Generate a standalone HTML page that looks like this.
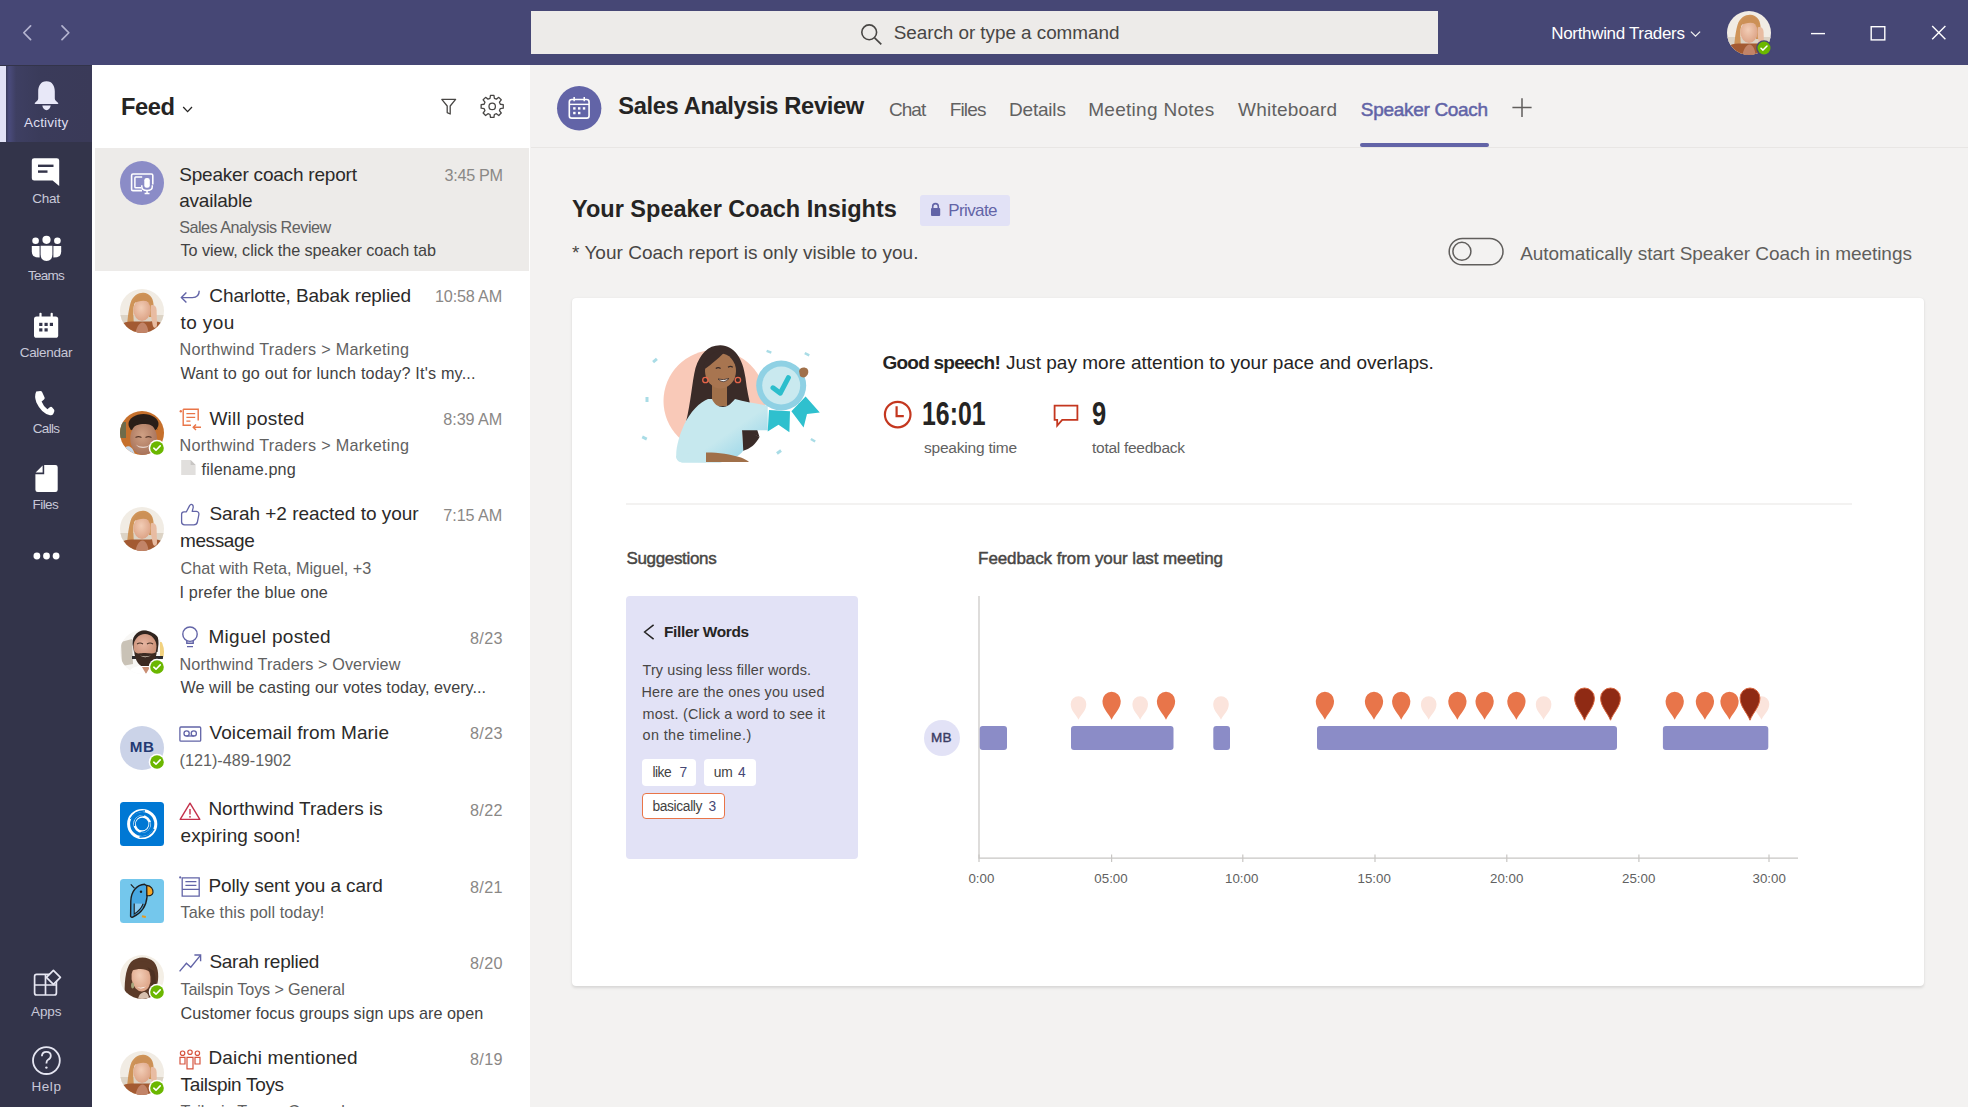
<!DOCTYPE html>
<html><head><meta charset="utf-8"><title>Teams - Speaker Coach</title>
<style>
html,body{margin:0;padding:0;width:1968px;height:1107px;overflow:hidden;background:#F3F2F1;font-family:"Liberation Sans",sans-serif;}
.t{position:absolute;white-space:nowrap;line-height:1;font-family:"Liberation Sans",sans-serif;}
.a{position:absolute;}
svg{position:absolute;overflow:visible;}
</style></head><body>
<div class="a" style="left:0;top:0;width:1968px;height:65px;background:#464775"></div>
<div class="a" style="left:0;top:65px;width:92px;height:1042px;background:#33344A"></div>
<div class="a" style="left:0;top:66px;width:92px;height:76px;background:linear-gradient(90deg,#3A3B5A 6px,#4A4B7C 9px,#3E3F62 16px,#3A3B5A 40px,#3A3A58 100%)"></div>
<div class="a" style="left:0;top:66px;width:6px;height:76px;background:#E2E2F6"></div>
<div class="a" style="left:92px;top:65px;width:438px;height:1042px;background:#FFFFFF"></div>
<div class="a" style="left:95px;top:148px;width:434px;height:123px;background:#EDEBE9"></div>
<div class="a" style="left:530.5px;top:11px;width:907px;height:43px;background:#EDEBE9"></div>
<div class="a" style="left:531px;top:147px;width:1437px;height:1px;background:#E8E6E4"></div>
<div class="a" style="left:1360px;top:143px;width:129px;height:4px;background:#6264A7;border-radius:2px"></div>
<div class="a" style="left:920px;top:195px;width:90px;height:31px;background:#E2E2F6;border-radius:3px"></div>
<div class="a" style="left:572px;top:298px;width:1352px;height:687.5px;background:#FFFFFF;border-radius:4px;box-shadow:0 1.5px 3px rgba(0,0,0,0.11),0 0 1px rgba(0,0,0,0.06)"></div>
<div class="a" style="left:626px;top:503px;width:1226px;height:2px;background:#F3F2F1"></div>
<div class="a" style="left:626px;top:596px;width:232px;height:263px;background:#E2E2F6;border-radius:4px"></div>
<div class="a" style="left:642px;top:759px;width:54px;height:27px;background:#FFFFFF;border-radius:4px"></div>
<div class="a" style="left:704px;top:759px;width:52px;height:27px;background:#FFFFFF;border-radius:4px"></div>
<div class="a" style="left:642px;top:793px;width:81px;height:24px;background:#FFFFFF;border:1.5px solid #E97548;border-radius:4px"></div>
<div class="a" style="left:924px;top:720px;width:36px;height:36px;background:#E2E2F6;border-radius:50%"></div>

<svg width="0" height="0" style="position:absolute;left:0;top:0">
<defs>
 <clipPath id="cc"><circle cx="22" cy="22" r="22"/></clipPath>
 <radialGradient id="skinA" cx="0.45" cy="0.4" r="0.6"><stop offset="0" stop-color="#F2CDB6"/><stop offset="1" stop-color="#DDA487"/></radialGradient>
 <radialGradient id="skinW" cx="0.45" cy="0.4" r="0.6"><stop offset="0" stop-color="#CFA084"/><stop offset="1" stop-color="#A8735A"/></radialGradient>
 <radialGradient id="skinM" cx="0.45" cy="0.4" r="0.6"><stop offset="0" stop-color="#E6B4A0"/><stop offset="1" stop-color="#C98E74"/></radialGradient>
 <symbol id="av_blonde" viewBox="0 0 44 44"><g clip-path="url(#cc)">
  <rect width="44" height="44" fill="#F1ECE4"/>
  <rect y="26" width="44" height="18" fill="#DCD3C5"/>
  <path d="M6 44 C7.5 34 8 22 10.5 14 C13 6 19 3.5 23.5 3.8 C29 4.2 33 8 33.5 15 C33.8 20 33 24 32 28 L29 28 C30 20 29 13 24 10 C18 8 14 12 13.5 20 C13 28 14 36 15 44 Z" fill="#CF9458"/>
  <ellipse cx="22" cy="21" rx="8.6" ry="11" fill="url(#skinA)"/>
  <path d="M13 14.5 C14.5 7.5 20 5 25 5.5 C30 6 32.5 10 32.5 15.5 C28.5 11.5 22 10 13 14.5 Z" fill="#CC9056"/>
  <path d="M0 44 V36 C4 33 9 32 14 32.5 L30 32.5 C35 31.5 40 32.5 44 35.5 V44 Z" fill="#A35A32"/>
  <path d="M15.5 44 C16.5 38 19 34 22.5 33.5 C26 34 28 38 28.5 44 Z" fill="#C28468"/>
  <path d="M30.8 16.5 C33.5 15.2 36.4 17 36.6 21 L37 36 C36.6 39.5 33.6 39.6 32.8 36.4 L30.8 26 Z" fill="#E8BCA2"/>
 </g></symbol>
 <symbol id="av_will" viewBox="0 0 44 44"><g clip-path="url(#cc)">
  <rect width="44" height="44" fill="#C6702C"/>
  <rect x="0" y="11" width="6" height="16" fill="#6F6B4A"/>
  <ellipse cx="23.5" cy="13" rx="15" ry="10" fill="#2A1E18"/>
  <ellipse cx="23.6" cy="27.5" rx="13.4" ry="16.6" fill="url(#skinW)"/>
  <path d="M10.2 19 C10.8 10.5 17 7.5 24 7.5 C31 7.5 36.5 10.5 37.4 19 C33.5 14 28.5 13 24 13 C19 13 14 14.5 10.2 19 Z" fill="#2A1E18"/>
  <path d="M16 33.5 C19.5 36.5 27 36.5 30 33.5 C28 38 18.5 38.5 16 33.5 Z" fill="#E6D3CA"/>
  <path d="M15.5 26.5 Q18.5 24.8 21.5 26.5 M25.5 26.5 Q28.5 24.8 31.5 26.5" stroke="#5A3A2C" stroke-width="1.1" fill="none"/>
  <path d="M3 44 L5.5 36 C9 34 13 36 15 44 Z" fill="#C6D8EA"/>
 </g></symbol>
 <symbol id="av_miguel" viewBox="0 0 44 44"><g clip-path="url(#cc)">
  <rect width="44" height="44" fill="#F8F7F5"/>
  <path d="M1 12 L12 9 L13 34 L2 36 Z" fill="#C9C2B6"/>
  <rect x="40" y="12" width="5" height="15" fill="#F2D27F"/>
  <rect x="12" y="26" width="31" height="3" fill="#2C2C30"/>
  <path d="M12.5 14 C12 4 20 0 26 0 C34 0 39 4 38.5 14 L37.5 22 L35.5 22 L35 12 C31 8 18 8 15 13 L14 22 Z" fill="#30241E"/>
  <ellipse cx="25" cy="16.5" rx="11.5" ry="12.5" fill="url(#skinM)"/>
  <path d="M14 20 C15 32 20 37 25 37 C31 37 36 32 37 20 C35 25 31 23 25 23 C19 23 16 25 14 20 Z" fill="#3B2A22"/>
  <path d="M20 25.5 Q25 29 31 25.5 Q25 27.5 20 25.5 Z" fill="#F1E6D6"/>
  <path d="M17 14 Q20 12 23 14 M27 14 Q30 12 33 14" stroke="#4A3328" stroke-width="1.1" fill="none"/>
  <path d="M8 44 C10 38 16 36 20 36 L31 36 C36 36 41 38 43 44 Z" fill="#FFFFFF"/>
  <path d="M22 37 L26 44 L30 37 Z" fill="#C98E74"/>
 </g></symbol>
 <symbol id="av_sarah2" viewBox="0 0 44 44"><g clip-path="url(#cc)">
  <rect width="44" height="44" fill="#F4EFE6"/>
  <path d="M5 44 C4 30 5 14 11 7 C17 1 28 1 34 7 C39 13 39 24 37 30 C35 36 30 40 26 44 Z" fill="#5B3A28"/>
  <ellipse cx="21" cy="23" rx="9.5" ry="13.5" fill="url(#skinA)" transform="rotate(-8 21 23)"/>
  <path d="M11 16 C13 8 20 5 27 7 C33 9 35 15 34 22 C31 16 24 11 11 16 Z" fill="#5B3A28"/>
  <path d="M27 12 C31 16 33 24 31 32 C29 37 26 40 24 44 L34 44 C36 36 37 24 34 16 Z" fill="#4E3122"/>
  <path d="M17 32 Q21 35 26 31.5 Q21 33.5 17 32 Z" fill="#FFFFFF"/>
  <ellipse cx="12.6" cy="30.5" rx="1.5" ry="3" fill="#A7A57C"/>
  <path d="M18 44 C19 39 22 37 25 37 C28 38 29 41 29 44 Z" fill="#D6BFAE"/>
 </g></symbol>
</defs></svg>

<svg style="left:0;top:0" width="1968" height="65">
 <path d="M30.6 25.9 L23.8 32.75 L30.6 39.6" stroke="#B4B4D0" stroke-width="1.7" fill="none" stroke-linecap="round" stroke-linejoin="round"/>
 <path d="M62 25.9 L68.8 32.75 L62 39.6" stroke="#B4B4D0" stroke-width="1.7" fill="none" stroke-linecap="round" stroke-linejoin="round"/>
 <circle cx="869.2" cy="32.3" r="7.4" stroke="#484644" stroke-width="1.6" fill="none"/>
 <path d="M874.6 37.8 L881.3 44.3" stroke="#484644" stroke-width="1.7"/>
 <path d="M1690.9 31.6 L1695.5 36.2 L1700.1 31.6" stroke="#F0F0F0" stroke-width="1.3" fill="none"/>
 <path d="M1811 33.6 H1825" stroke="#FFFFFF" stroke-width="1.4"/>
 <rect x="1871.2" y="26.7" width="13.6" height="13.2" stroke="#FFFFFF" stroke-width="1.4" fill="none"/>
 <path d="M1932.2 26 L1945.4 39.2 M1945.4 26 L1932.2 39.2" stroke="#FFFFFF" stroke-width="1.4"/>
</svg>
<svg style="left:1727.2px;top:10.5px" width="44" height="44" viewBox="0 0 44 44"><use href="#av_blonde"/></svg>
<svg style="left:1754.4px;top:37.9px" width="20" height="20" viewBox="0 0 20 20"><circle cx="10" cy="10" r="7.8" fill="#464775"/><circle cx="10" cy="10" r="6.5" fill="#6BB700"/><path d="M7 10.2 L9 12.1 L13 8" stroke="#fff" stroke-width="1.5" fill="none" stroke-linecap="round" stroke-linejoin="round"/></svg>
<svg style="left:0;top:65px" width="92" height="1042" viewBox="0 65 92 1042">
 <path d="M46.5 81.2 C40.6 81.2 38.2 86.2 38.2 91.5 L38.2 98.6 C38.2 100.2 36.6 101.6 34.8 103 Q34.2 104 35.5 104 L57.5 104 Q58.8 104 58.2 103 C56.4 101.6 54.8 100.2 54.8 98.6 L54.8 91.5 C54.8 86.2 52.4 81.2 46.5 81.2 Z" fill="#E8E8F8"/>
 <path d="M42.3 105.6 C42.6 108.3 44.4 110.2 46.5 110.2 C48.6 110.2 50.4 108.3 50.7 105.6 Z" fill="#E8E8F8"/>
 <path d="M34.2 158.2 H56.8 Q59.2 158.2 59.2 160.6 V186 L52.6 180.6 H34.2 Q31.8 180.6 31.8 178.2 V160.6 Q31.8 158.2 34.2 158.2 Z" fill="#FFFFFF"/>
 <rect x="38" y="164.6" width="15.5" height="2.4" fill="#33344A"/>
 <rect x="38" y="170.4" width="9.5" height="2.4" fill="#33344A"/>
 <circle cx="35.6" cy="240.8" r="3.3" fill="#fff"/><circle cx="46.5" cy="239.8" r="4.1" fill="#fff"/><circle cx="57.4" cy="240.8" r="3.3" fill="#fff"/>
 <path d="M31.8 246 H39.6 V257.5 Q35.4 257.5 33.4 256 Q31.8 254.5 31.8 251.5 Z" fill="#fff"/>
 <path d="M61.2 246 H53.4 V257.5 Q57.6 257.5 59.6 256 Q61.2 254.5 61.2 251.5 Z" fill="#fff"/>
 <path d="M40.6 245.8 H52.4 V254.5 Q52.4 261 46.5 261 Q40.6 261 40.6 254.5 Z" fill="#fff"/>
 <rect x="34" y="316.5" width="24.2" height="21.3" rx="2.6" fill="#fff"/>
 <rect x="39.4" y="312.8" width="2.2" height="5.5" rx="1" fill="#fff"/><rect x="50.6" y="312.8" width="2.2" height="5.5" rx="1" fill="#fff"/>
 <rect x="39.2" y="322.8" width="3.2" height="3.2" fill="#33344A"/><rect x="44.5" y="322.8" width="3.2" height="3.2" fill="#33344A"/><rect x="49.8" y="322.8" width="3.2" height="3.2" fill="#33344A"/>
 <rect x="39.2" y="328.3" width="3.2" height="3.2" fill="#33344A"/><rect x="44.5" y="328.3" width="3.2" height="3.2" fill="#33344A"/>
 <path d="M36.2 391.6 L40.4 391 Q41.6 391 42.2 392.2 L44.6 397.6 Q45 398.8 44 399.6 L41.6 401.4 Q43.2 405.8 47.4 409.2 L49.8 407.2 Q50.8 406.4 51.8 407 L54 409.6 Q54.6 410.6 54.2 411.8 L53.2 414 Q52.2 415.6 50 415.2 Q41.4 413.2 36.4 402.4 Q34 396.4 36.2 391.6 Z" fill="#fff"/>
 <path d="M44.2 465 H55.4 Q57.7 465 57.7 467.3 V489.7 Q57.7 492 55.4 492 H37.7 Q35.4 492 35.4 489.7 V474.2 H44.2 Z" fill="#fff"/>
 <path d="M42.6 465.4 L35.6 472.6 L42.6 472.6 Z" fill="#fff"/>
 <circle cx="36.9" cy="556" r="3.4" fill="#fff"/><circle cx="46.5" cy="556" r="3.4" fill="#fff"/><circle cx="56.1" cy="556" r="3.4" fill="#fff"/>
 <path d="M36.6 974.4 H54.4 Q56.4 974.4 56.4 976.4 V993 Q56.4 995 54.4 995 H36.6 Q34.6 995 34.6 993 V976.4 Q34.6 974.4 36.6 974.4 Z M45.5 974.4 V995 M34.6 985 H56.4" stroke="#E6E6F2" stroke-width="1.7" fill="none"/>
 <path d="M53.4 970.4 L60.4 977.4 L53.4 984.4 L46.4 977.4 Z" stroke="#E6E6F2" stroke-width="1.7" fill="#33344A" stroke-linejoin="round"/>
 <circle cx="46.4" cy="1060.6" r="13.4" stroke="#E6E6F2" stroke-width="1.8" fill="none"/>
 <path d="M41.9 1056.2 Q42 1051.8 46.4 1051.8 Q50.8 1051.8 50.8 1055.8 Q50.8 1058.4 48 1059.8 Q46.4 1060.8 46.4 1063.4" stroke="#E6E6F2" stroke-width="1.8" fill="none"/>
 <circle cx="46.4" cy="1067.6" r="1.2" fill="#E6E6F2"/>
</svg>
<svg style="left:0;top:0" width="540" height="140">
 <path d="M183.2 107 L187.6 111.6 L192 107" stroke="#252423" stroke-width="1.3" fill="none"/>
 <path d="M441.8 99.4 H455.6 L450.2 106 V114 L447.2 112.6 V106 Z" stroke="#484644" stroke-width="1.3" fill="none" stroke-linejoin="round"/>
 <path d="M500.32 104.24 L503.26 104.66 L503.26 108.14 L500.32 108.56 L499.47 110.61 L501.25 112.99 L498.79 115.45 L496.41 113.67 L494.36 114.52 L493.94 117.46 L490.46 117.46 L490.04 114.52 L487.99 113.67 L485.61 115.45 L483.15 112.99 L484.93 110.61 L484.08 108.56 L481.14 108.14 L481.14 104.66 L484.08 104.24 L484.93 102.19 L483.15 99.81 L485.61 97.35 L487.99 99.13 L490.04 98.28 L490.46 95.34 L493.94 95.34 L494.36 98.28 L496.41 99.13 L498.79 97.35 L501.25 99.81 L499.47 102.19 Z" stroke="#484644" stroke-width="1.3" fill="none" stroke-linejoin="round"/>
 <circle cx="492.2" cy="106.4" r="3.2" stroke="#484644" stroke-width="1.3" fill="none"/>
</svg>
<svg style="left:120px;top:161px" width="44" height="44"><circle cx="22" cy="22" r="22" fill="#8B8CC7"/><path d="M22 29.6 H13 Q11.6 29.6 11.6 28.2 V14.4 Q11.6 13 13 13 H31.4 Q32.8 13 32.8 14.4 V23.6" stroke="#fff" stroke-width="1.6" fill="none"/><path d="M22.2 16.1 H15.7 Q14.9 16.1 14.9 16.9 V26 Q14.9 26.8 15.7 26.8 H21.2" stroke="#fff" stroke-width="1.5" fill="none"/><rect x="24.3" y="16.9" width="5.5" height="9.9" rx="2.3" fill="#fff"/><path d="M21.8 24.2 V25.4 Q21.8 29.4 27.05 29.4 Q32.3 29.4 32.3 25.4 V24.2" stroke="#fff" stroke-width="1.5" fill="none"/><path d="M27.05 29.4 V32.3 M24.6 32.5 H29.5" stroke="#fff" stroke-width="1.5"/></svg>
<svg style="left:120.0px;top:288.5px" width="44" height="44" viewBox="0 0 44 44"><use href="#av_blonde"/></svg>
<svg style="left:120.0px;top:411.0px" width="44" height="44" viewBox="0 0 44 44"><use href="#av_will"/></svg>
<svg style="left:147.0px;top:438.0px" width="20" height="20" viewBox="0 0 20 20"><circle cx="10" cy="10" r="8.3" fill="#FFFFFF"/><circle cx="10" cy="10" r="6.8" fill="#6BB700"/><path d="M6.8 10.2 L9 12.2 L13.2 7.9" stroke="#fff" stroke-width="1.6" fill="none" stroke-linecap="round" stroke-linejoin="round"/></svg>
<svg style="left:120.0px;top:507.0px" width="44" height="44" viewBox="0 0 44 44"><use href="#av_blonde"/></svg>
<svg style="left:120.0px;top:630.0px" width="44" height="44" viewBox="0 0 44 44"><use href="#av_miguel"/></svg>
<svg style="left:147.0px;top:657.0px" width="20" height="20" viewBox="0 0 20 20"><circle cx="10" cy="10" r="8.3" fill="#FFFFFF"/><circle cx="10" cy="10" r="6.8" fill="#6BB700"/><path d="M6.8 10.2 L9 12.2 L13.2 7.9" stroke="#fff" stroke-width="1.6" fill="none" stroke-linecap="round" stroke-linejoin="round"/></svg>
<svg style="left:120px;top:726px" width="44" height="44"><circle cx="22" cy="22" r="22" fill="#CBD3E8"/></svg>
<svg style="left:147px;top:752px" width="20" height="20" viewBox="0 0 20 20"><circle cx="10" cy="10" r="8.3" fill="#fff"/><circle cx="10" cy="10" r="6.8" fill="#6BB700"/><path d="M6.8 10.2 L9 12.2 L13.2 7.9" stroke="#fff" stroke-width="1.6" fill="none" stroke-linecap="round" stroke-linejoin="round"/></svg>
<svg style="left:120px;top:802px" width="44" height="44"><rect width="44" height="44" rx="3.5" fill="#0078D4"/><circle cx="22.2" cy="22" r="13.6" stroke="#fff" stroke-width="3" fill="none"/><circle cx="22.2" cy="22" r="7.6" stroke="#fff" stroke-width="2.6" fill="none"/><path d="M10.5 17 Q15 8.5 25 9" stroke="#0078D4" stroke-width="1.4" fill="none"/><path d="M34 27 Q29.5 35.5 19.5 35" stroke="#0078D4" stroke-width="1.4" fill="none"/><path d="M14.5 24 Q14 14 24 13.5" stroke="#0078D4" stroke-width="1.2" fill="none"/><path d="M30 20 Q30.5 30 20.5 30.5" stroke="#0078D4" stroke-width="1.2" fill="none"/></svg>
<svg style="left:120px;top:878.6px" width="44" height="44"><rect width="44" height="44" rx="3.5" fill="#74C7EC"/><path d="M24.5 5.2 C17 5.6 11.2 12 10.8 22 L10.6 37.2 Q11 38.6 12.8 38 C20.5 34.5 26.2 28 27 18 L27 7 Z" fill="#48A8E2" stroke="#1E1E1E" stroke-width="1.4" stroke-linejoin="round"/><path d="M26.8 6.4 C31 6.8 33.4 10 33 13.6 C32.6 16.2 30 17.2 27 16.6 Z" fill="#F6A828" stroke="#1E1E1E" stroke-width="1.1"/><path d="M14.2 24.5 L14.2 35 Q20.5 31.5 23.2 24.8" stroke="#1E1E1E" stroke-width="1.1" fill="#8CCBF0"/><circle cx="21" cy="12.8" r="1.2" fill="#1E1E1E"/><path d="M10.8 5.4 L14.4 9.2" stroke="#1E1E1E" stroke-width="1.2"/><path d="M22 37.2 L25.8 38" stroke="#E69A1F" stroke-width="2"/></svg>
<svg style="left:120.0px;top:955.3px" width="44" height="44" viewBox="0 0 44 44"><use href="#av_sarah2"/></svg>
<svg style="left:147.0px;top:982.3px" width="20" height="20" viewBox="0 0 20 20"><circle cx="10" cy="10" r="8.3" fill="#FFFFFF"/><circle cx="10" cy="10" r="6.8" fill="#6BB700"/><path d="M6.8 10.2 L9 12.2 L13.2 7.9" stroke="#fff" stroke-width="1.6" fill="none" stroke-linecap="round" stroke-linejoin="round"/></svg>
<svg style="left:120.0px;top:1051.3px" width="44" height="44" viewBox="0 0 44 44"><use href="#av_blonde"/></svg>
<svg style="left:147.0px;top:1078.3px" width="20" height="20" viewBox="0 0 20 20"><circle cx="10" cy="10" r="8.3" fill="#FFFFFF"/><circle cx="10" cy="10" r="6.8" fill="#6BB700"/><path d="M6.8 10.2 L9 12.2 L13.2 7.9" stroke="#fff" stroke-width="1.6" fill="none" stroke-linecap="round" stroke-linejoin="round"/></svg>
<svg style="left:0;top:0" width="540" height="1107">
 <path d="M199.2 290.8 Q199.2 297.6 192.4 297.6 H181.6" stroke="#6264A7" stroke-width="1.4" fill="none"/>
 <path d="M186.4 292.6 L181.4 297.6 L186.4 302.6" stroke="#6264A7" stroke-width="1.4" fill="none"/>
 <path d="M183.2 409.2 H198.2 V420.5 M183.2 409.2 V425.2 H191" stroke="#E97548" stroke-width="1.4" fill="none"/>
 <circle cx="180.8" cy="411.2" r="1.2" fill="#E97548"/>
 <path d="M186.4 413.6 H195.2 M186.4 417.4 H195.2 M186.4 421.2 H190.4" stroke="#E97548" stroke-width="1.3"/>
 <path d="M201 427.2 H193.2 M196 424.4 L193.2 427.2 L196 430" stroke="#E97548" stroke-width="1.4" fill="none"/>
 <path d="M181.2 460 H190.6 L195.6 465 V475 H181.2 Z" fill="#E1DFDD"/>
 <path d="M190.6 460 V465 H195.6" fill="#C8C6C4"/>
 <path d="M181.6 514.2 Q181.6 511.8 184 511.8 H186.4 L189.6 505.6 Q191.2 503.6 192.6 505 Q193.6 506.2 193 508.4 L192.2 511.4 H196.4 Q199.4 511.8 198.8 515 L197.4 522 Q196.8 524.8 193.8 524.8 H184.6 Q181.6 524.8 181.6 522 Z" stroke="#6264A7" stroke-width="1.3" fill="none" stroke-linejoin="round"/>
 <circle cx="190" cy="634.2" r="7.2" stroke="#6264A7" stroke-width="1.4" fill="none"/>
 <path d="M186.8 640.8 V643.2 H193.2 V640.8 M187 646.6 H193" stroke="#6264A7" stroke-width="1.4" fill="none"/>
 <rect x="179.9" y="727" width="20.8" height="14.2" rx="1" stroke="#6264A7" stroke-width="1.3" fill="none"/>
 <circle cx="186.6" cy="733.4" r="2.6" stroke="#6264A7" stroke-width="1.3" fill="none"/>
 <circle cx="193.8" cy="733.4" r="2.6" stroke="#6264A7" stroke-width="1.3" fill="none"/>
 <path d="M186.6 736 H193.8" stroke="#6264A7" stroke-width="1.3"/>
 <path d="M190 803.2 L199.8 819.4 H180.2 Z" stroke="#C4314B" stroke-width="1.4" fill="none" stroke-linejoin="round"/>
 <path d="M190 809 V814.4" stroke="#C4314B" stroke-width="1.4"/><circle cx="190" cy="816.8" r="0.9" fill="#C4314B"/>
 <path d="M182.2 877.8 H199.2 V896.2 H182.2 Z" stroke="#6264A7" stroke-width="1.3" fill="none"/>
 <circle cx="180.2" cy="877.4" r="1.1" fill="#6264A7"/>
 <path d="M185.4 881.6 H196.4 M185.4 885.4 H196.4 M182.2 889.4 H199.2" stroke="#6264A7" stroke-width="1.3"/>
 <path d="M179.6 971.4 L186.4 963.2 L190.8 967.2 L200.2 955.6" stroke="#6264A7" stroke-width="1.4" fill="none"/>
 <path d="M194.4 955 H200.6 V961.2" stroke="#6264A7" stroke-width="1.4" fill="none"/>
 <circle cx="182.6" cy="1053.2" r="2.2" stroke="#D6543E" stroke-width="1.2" fill="none"/>
 <circle cx="190" cy="1052.2" r="2.2" stroke="#D6543E" stroke-width="1.2" fill="none"/>
 <circle cx="197.4" cy="1053.2" r="2.2" stroke="#D6543E" stroke-width="1.2" fill="none"/>
 <path d="M180 1057.4 H185 V1064 H180 Z M195 1057.4 H200 V1064 H195 Z M187 1057.4 H193 V1068.8 H187 Z" stroke="#D6543E" stroke-width="1.2" fill="none"/>
</svg>
<svg style="left:557.4px;top:85.6px" width="44.4" height="44.4" viewBox="0 0 44 44"><circle cx="22" cy="22" r="22" fill="#6264A7"/><rect x="12.2" y="13.4" width="19.6" height="18.4" rx="2.4" stroke="#fff" stroke-width="1.6" fill="none"/><path d="M12.2 18.2 H31.8" stroke="#fff" stroke-width="1.4"/><path d="M17 11 V15 M27 11 V15" stroke="#fff" stroke-width="1.5"/><rect x="16" y="21" width="2.4" height="2.4" fill="#fff"/><rect x="20.8" y="21" width="2.4" height="2.4" fill="#fff"/><rect x="25.6" y="21" width="2.4" height="2.4" fill="#fff"/><rect x="16" y="25.6" width="2.4" height="2.4" fill="#fff"/><rect x="20.8" y="25.6" width="2.4" height="2.4" fill="#fff"/></svg>
<svg style="left:1505px;top:95px" width="40" height="30"><path d="M17 3.2 V22 M7.4 12.6 H26.6" stroke="#605E5C" stroke-width="1.5"/></svg>
<svg style="left:925px;top:198px" width="20" height="22"><path d="M7.7 10 V8.4 Q7.7 5.6 10.5 5.6 Q13.3 5.6 13.3 8.4 V10" stroke="#6264A7" stroke-width="1.6" fill="none"/><rect x="6" y="10" width="9.2" height="8" rx="1" fill="#6264A7"/></svg>
<svg style="left:1440px;top:230px" width="80" height="44"><rect x="9.2" y="8.4" width="53.8" height="26.4" rx="13.2" stroke="#605E5C" stroke-width="1.5" fill="none"/><circle cx="21.9" cy="21.3" r="9" stroke="#605E5C" stroke-width="1.5" fill="none"/></svg>
<svg style="left:870px;top:390px" width="230" height="50" viewBox="870 390 230 50">
 <circle cx="897.7" cy="414.6" r="12.8" stroke="#C4371F" stroke-width="2.2" fill="none"/>
 <path d="M896.6 406.2 V416.2 H903.8" stroke="#C4371F" stroke-width="2.2" fill="none"/>
 <path d="M1054.6 405.6 H1077.4 V419.8 H1062.2 L1057.2 425.6 V419.8 H1054.6 Z" stroke="#C4371F" stroke-width="1.8" fill="none" stroke-linejoin="miter"/>
</svg>
<svg style="left:630px;top:615px" width="40" height="30" viewBox="630 615 40 30"><path d="M653.6 624.8 L644.6 632 L653.6 639.2" stroke="#252423" stroke-width="1.5" fill="none"/></svg>
<svg style="left:0;top:0" width="1968" height="1107">
<path d="M979 596 V858.2 H1798" stroke="#C8C6C4" stroke-width="1.2" fill="none"/>
<path d="M979.0 854.4 V862" stroke="#C8C6C4" stroke-width="1.2"/>
<path d="M1111.6 854.4 V862" stroke="#C8C6C4" stroke-width="1.2"/>
<path d="M1242.8 854.4 V862" stroke="#C8C6C4" stroke-width="1.2"/>
<path d="M1375.0 854.4 V862" stroke="#C8C6C4" stroke-width="1.2"/>
<path d="M1506.8 854.4 V862" stroke="#C8C6C4" stroke-width="1.2"/>
<path d="M1638.9 854.4 V862" stroke="#C8C6C4" stroke-width="1.2"/>
<path d="M1769.0 854.4 V862" stroke="#C8C6C4" stroke-width="1.2"/>
<rect x="979.7" y="725.9" width="27.3" height="24" rx="3" fill="#8B8CC7"/>
<rect x="1071.0" y="725.9" width="102.5" height="24" rx="3" fill="#8B8CC7"/>
<rect x="1213.3" y="725.9" width="16.7" height="24" rx="3" fill="#8B8CC7"/>
<rect x="1317.0" y="725.9" width="300.0" height="24" rx="3" fill="#8B8CC7"/>
<rect x="1662.9" y="725.9" width="105.4" height="24" rx="3" fill="#8B8CC7"/>
<path d="M1078.50 719.80 C1076.16 714.27 1070.70 711.02 1070.70 704.00 A7.80 7.80 0 0 1 1086.30 704.00 C1086.30 711.02 1080.84 714.27 1078.50 719.80 Z" fill="#FBE4DC"/>
<path d="M1111.60 719.80 C1108.86 713.20 1102.45 709.18 1102.45 700.95 A9.15 9.15 0 0 1 1120.75 700.95 C1120.75 709.18 1114.34 713.20 1111.60 719.80 Z" fill="#E8754A"/>
<path d="M1140.20 719.80 C1137.86 714.27 1132.40 711.02 1132.40 704.00 A7.80 7.80 0 0 1 1148.00 704.00 C1148.00 711.02 1142.54 714.27 1140.20 719.80 Z" fill="#FBE4DC"/>
<path d="M1166.00 719.80 C1163.26 713.20 1156.85 709.18 1156.85 700.95 A9.15 9.15 0 0 1 1175.15 700.95 C1175.15 709.18 1168.74 713.20 1166.00 719.80 Z" fill="#E8754A"/>
<path d="M1221.00 719.80 C1218.66 714.27 1213.20 711.02 1213.20 704.00 A7.80 7.80 0 0 1 1228.80 704.00 C1228.80 711.02 1223.34 714.27 1221.00 719.80 Z" fill="#FBE4DC"/>
<path d="M1324.90 719.80 C1322.16 713.20 1315.75 709.18 1315.75 700.95 A9.15 9.15 0 0 1 1334.05 700.95 C1334.05 709.18 1327.64 713.20 1324.90 719.80 Z" fill="#E8754A"/>
<path d="M1374.00 719.80 C1371.26 713.20 1364.85 709.18 1364.85 700.95 A9.15 9.15 0 0 1 1383.15 700.95 C1383.15 709.18 1376.74 713.20 1374.00 719.80 Z" fill="#E8754A"/>
<path d="M1401.20 719.80 C1398.46 713.20 1392.05 709.18 1392.05 700.95 A9.15 9.15 0 0 1 1410.35 700.95 C1410.35 709.18 1403.94 713.20 1401.20 719.80 Z" fill="#E8754A"/>
<path d="M1428.70 719.80 C1426.36 714.27 1420.90 711.02 1420.90 704.00 A7.80 7.80 0 0 1 1436.50 704.00 C1436.50 711.02 1431.04 714.27 1428.70 719.80 Z" fill="#FBE4DC"/>
<path d="M1457.40 719.80 C1454.66 713.20 1448.25 709.18 1448.25 700.95 A9.15 9.15 0 0 1 1466.55 700.95 C1466.55 709.18 1460.14 713.20 1457.40 719.80 Z" fill="#E8754A"/>
<path d="M1484.60 719.80 C1481.86 713.20 1475.45 709.18 1475.45 700.95 A9.15 9.15 0 0 1 1493.75 700.95 C1493.75 709.18 1487.34 713.20 1484.60 719.80 Z" fill="#E8754A"/>
<path d="M1516.40 719.80 C1513.66 713.20 1507.25 709.18 1507.25 700.95 A9.15 9.15 0 0 1 1525.55 700.95 C1525.55 709.18 1519.14 713.20 1516.40 719.80 Z" fill="#E8754A"/>
<path d="M1543.60 719.80 C1541.26 714.27 1535.80 711.02 1535.80 704.00 A7.80 7.80 0 0 1 1551.40 704.00 C1551.40 711.02 1545.94 714.27 1543.60 719.80 Z" fill="#FBE4DC"/>
<path d="M1584.50 720.20 C1581.53 712.40 1574.60 706.81 1574.60 697.90 A9.90 9.90 0 0 1 1594.40 697.90 C1594.40 706.81 1587.47 712.40 1584.50 720.20 Z" fill="#8F2A14" stroke="#D9643C" stroke-width="1"/>
<path d="M1610.50 720.20 C1607.53 712.40 1600.60 706.81 1600.60 697.90 A9.90 9.90 0 0 1 1620.40 697.90 C1620.40 706.81 1613.47 712.40 1610.50 720.20 Z" fill="#8F2A14" stroke="#D9643C" stroke-width="1"/>
<path d="M1674.70 719.80 C1671.96 713.20 1665.55 709.18 1665.55 700.95 A9.15 9.15 0 0 1 1683.85 700.95 C1683.85 709.18 1677.44 713.20 1674.70 719.80 Z" fill="#E8754A"/>
<path d="M1704.90 719.80 C1702.16 713.20 1695.75 709.18 1695.75 700.95 A9.15 9.15 0 0 1 1714.05 700.95 C1714.05 709.18 1707.64 713.20 1704.90 719.80 Z" fill="#E8754A"/>
<path d="M1729.50 719.80 C1726.76 713.20 1720.35 709.18 1720.35 700.95 A9.15 9.15 0 0 1 1738.65 700.95 C1738.65 709.18 1732.24 713.20 1729.50 719.80 Z" fill="#E8754A"/>
<path d="M1761.50 719.80 C1759.16 714.27 1753.70 711.02 1753.70 704.00 A7.80 7.80 0 0 1 1769.30 704.00 C1769.30 711.02 1763.84 714.27 1761.50 719.80 Z" fill="#FBE4DC"/>
<path d="M1750.00 720.20 C1747.03 712.40 1740.10 706.81 1740.10 697.90 A9.90 9.90 0 0 1 1759.90 697.90 C1759.90 706.81 1752.97 712.40 1750.00 720.20 Z" fill="#8F2A14" stroke="#D9643C" stroke-width="1"/>
</svg>
<svg style="left:620px;top:330px" width="210" height="150" viewBox="0 0 210 150">
 <defs>
  <clipPath id="ilc"><rect x="0" y="0" width="210" height="132"/></clipPath>
  <linearGradient id="shg" x1="0" y1="0" x2="1" y2="1">
   <stop offset="0" stop-color="#C6E8EE"/><stop offset="0.55" stop-color="#C6E8EE"/><stop offset="0.8" stop-color="#A4DAEA"/><stop offset="1" stop-color="#C6E8EE"/>
  </linearGradient>
 </defs>
 <circle cx="94.5" cy="71" r="51" fill="#F9C9B8"/>
 <g fill="#A9DCE6">
  <rect x="32.5" y="29" width="5" height="3" transform="rotate(-40 35 30.5)"/>
  <rect x="25.5" y="67" width="3" height="5"/>
  <rect x="22" y="106.5" width="5" height="3" transform="rotate(25 24.5 108)"/>
  <rect x="146.5" y="20.5" width="5" height="2.5" transform="rotate(20 149 21.7)"/>
  <rect x="184.5" y="23" width="5" height="2.5" transform="rotate(25 187 24.3)"/>
  <rect x="190.5" y="109" width="5" height="2.5" transform="rotate(30 193 110.3)"/>
  <rect x="156.5" y="120.5" width="5" height="3" transform="rotate(-35 159 122)"/>
 </g>
 <path d="M100.5 15.2 C88 15 80 24 75.5 38 C72 52 71 72 66 92 L64 100 L122 100 L139.5 107 C134 90 128 70 125.5 48 C123 28 114 15.5 100.5 15.2 Z" fill="#3A2B28"/>
 <path d="M122 98 L139.5 107 C136 114 130 119 122.6 121 Z" fill="#3A2B28"/>
 <rect x="92" y="54" width="15" height="22" fill="#A0704A"/>
 <ellipse cx="100.5" cy="41" rx="15.5" ry="17.5" fill="#A87550"/>
 <path d="M83 40 C84 28 92 20 107.5 20 C100 26 93 34 83 40 Z" fill="#3A2B28"/>
 <path d="M95.8 38.5 Q98.2 36.6 100.6 38.5 M108 37.2 Q110.4 35.5 112.8 37.2" stroke="#3A2B28" stroke-width="1.2" fill="none"/>
 <path d="M98 49 Q103.5 54.5 109 48.5 Q103.5 50.5 98 49 Z" fill="#FFFFFF" stroke="#3A2B28" stroke-width="0.8"/>
 <circle cx="85.4" cy="50" r="2.7" stroke="#E8654A" stroke-width="1.3" fill="none"/>
 <circle cx="117.9" cy="50" r="2.7" stroke="#E8654A" stroke-width="1.3" fill="none"/>
 <path d="M88 69 C80 72 70 82 64 95 C60 104 56 116 56.2 126 C56.5 131 60 132.5 64 132.5 L100 132.5 C112 130 120 126 123.3 120.6 L122 100.3 L147.7 100.3 L147.7 75.9 C135 73 125 72 115 69 C111 74 107 77 103 77 C98 77 94 74 92 69 Z" fill="url(#shg)"/>
 <path d="M84 122.5 C95 122 110 124 121 127.5 C125 129 128 131 129 132 L84 132 Z" fill="#A0704A"/>
 <path d="M56 126 C56.5 131 60 132.5 64 132.5 L86 132.5 L86 122 C76 122 66 123 56 126 Z" fill="#C6E8EE"/>
 <path d="M149 80 L147.7 101.6 L158.5 94.8 L169.4 102.3 L170 81.3 Z" fill="#2FC0CE"/>
 <path d="M171.4 81.3 L183.6 97.5 L187 84 L199.8 82.6 L185.6 66.4 Z" fill="#2FC0CE"/>
 <circle cx="161.2" cy="55.5" r="25" fill="#8FD1E4"/>
 <circle cx="161.2" cy="55.5" r="19" fill="#C9E9EF"/>
 <path d="M153 57.8 L160.3 63.2 L168.4 47.6" stroke="#2BBECC" stroke-width="5" fill="none" stroke-linecap="round" stroke-linejoin="round"/>
 <path d="M179 41 C180 37 185 36.5 187.5 39 C189 41 188.5 44.5 186 46.5 C184 48 181.5 47.5 180 46 Z" fill="#A0704A"/>
</svg>
<div class="t" style="left:893.70px;top:23.94px;font-size:18.90px;color:#484644;letter-spacing:-0.047px">Search or type a command</div>
<div class="t" style="left:1551.30px;top:24.55px;font-size:17.00px;color:#FFFFFF;letter-spacing:-0.331px">Northwind Traders</div>
<div class="t" style="left:23.90px;top:115.53px;font-size:13.50px;color:#DEDEF0;letter-spacing:0.242px">Activity</div>
<div class="t" style="left:32.20px;top:192.03px;font-size:13.50px;color:#C8C8D8;letter-spacing:-0.222px">Chat</div>
<div class="t" style="left:28.00px;top:268.52px;font-size:13.50px;color:#C8C8D8;letter-spacing:-0.778px">Teams</div>
<div class="t" style="left:19.70px;top:345.52px;font-size:13.50px;color:#C8C8D8;letter-spacing:-0.298px">Calendar</div>
<div class="t" style="left:32.80px;top:422.12px;font-size:13.50px;color:#C8C8D8;letter-spacing:-0.689px">Calls</div>
<div class="t" style="left:32.60px;top:497.52px;font-size:13.50px;color:#C8C8D8;letter-spacing:-0.588px">Files</div>
<div class="t" style="left:31.00px;top:1004.52px;font-size:13.50px;color:#C8C8D8;letter-spacing:-0.107px">Apps</div>
<div class="t" style="left:31.40px;top:1080.03px;font-size:13.50px;color:#C8C8D8;letter-spacing:0.581px">Help</div>
<div class="t" style="left:121.00px;top:95.86px;font-size:23.70px;color:#252423;font-weight:700;letter-spacing:-0.406px">Feed</div>
<div class="t" style="left:179.20px;top:164.85px;font-size:19.00px;color:#2B2A29;letter-spacing:-0.204px">Speaker coach report</div>
<div class="t" style="left:444.60px;top:167.23px;font-size:16.20px;color:#8A8886;letter-spacing:-0.300px">3:45 PM</div>
<div class="t" style="left:179.20px;top:190.85px;font-size:19.00px;color:#2B2A29;letter-spacing:-0.204px">available</div>
<div class="t" style="left:179.20px;top:219.03px;font-size:16.20px;color:#616161;letter-spacing:-0.497px">Sales Analysis Review</div>
<div class="t" style="left:180.50px;top:241.73px;font-size:16.20px;color:#424242;letter-spacing:-0.052px">To view, click the speaker coach tab</div>
<div class="t" style="left:209.30px;top:285.85px;font-size:19.00px;color:#2B2A29;letter-spacing:-0.086px">Charlotte, Babak replied</div>
<div class="t" style="left:435.00px;top:288.23px;font-size:16.20px;color:#8A8886;letter-spacing:-0.172px">10:58 AM</div>
<div class="t" style="left:180.50px;top:312.85px;font-size:19.00px;color:#2B2A29;letter-spacing:0.402px">to you</div>
<div class="t" style="left:179.50px;top:341.13px;font-size:16.20px;color:#616161;letter-spacing:0.273px">Northwind Traders &gt; Marketing</div>
<div class="t" style="left:180.50px;top:364.63px;font-size:16.20px;color:#424242;letter-spacing:0.185px">Want to go out for lunch today? It's my...</div>
<div class="t" style="left:209.40px;top:408.55px;font-size:19.00px;color:#2B2A29;letter-spacing:0.205px">Will posted</div>
<div class="t" style="left:443.30px;top:410.93px;font-size:16.20px;color:#8A8886;letter-spacing:-0.083px">8:39 AM</div>
<div class="t" style="left:179.50px;top:436.83px;font-size:16.20px;color:#616161;letter-spacing:0.273px">Northwind Traders &gt; Marketing</div>
<div class="t" style="left:201.60px;top:461.23px;font-size:16.20px;color:#424242;letter-spacing:0.128px">filename.png</div>
<div class="t" style="left:209.40px;top:504.15px;font-size:19.00px;color:#2B2A29;letter-spacing:-0.019px">Sarah +2 reacted to your</div>
<div class="t" style="left:443.30px;top:506.53px;font-size:16.20px;color:#8A8886;letter-spacing:-0.083px">7:15 AM</div>
<div class="t" style="left:180.00px;top:530.85px;font-size:19.00px;color:#2B2A29;letter-spacing:-0.388px">message</div>
<div class="t" style="left:180.50px;top:560.23px;font-size:16.20px;color:#616161;letter-spacing:0.020px">Chat with Reta, Miguel, +3</div>
<div class="t" style="left:179.50px;top:583.63px;font-size:16.20px;color:#424242;letter-spacing:0.171px">I prefer the blue one</div>
<div class="t" style="left:208.40px;top:627.45px;font-size:19.00px;color:#2B2A29;letter-spacing:0.331px">Miguel posted</div>
<div class="t" style="left:470.00px;top:629.83px;font-size:16.20px;color:#8A8886;letter-spacing:0.366px">8/23</div>
<div class="t" style="left:179.50px;top:656.13px;font-size:16.20px;color:#616161;letter-spacing:0.101px">Northwind Traders &gt; Overview</div>
<div class="t" style="left:180.50px;top:679.43px;font-size:16.20px;color:#424242;letter-spacing:0.035px">We will be casting our votes today, every...</div>
<div class="t" style="left:209.40px;top:723.05px;font-size:19.00px;color:#2B2A29;letter-spacing:0.115px">Voicemail from Marie</div>
<div class="t" style="left:470.00px;top:725.43px;font-size:16.20px;color:#8A8886;letter-spacing:0.366px">8/23</div>
<div class="t" style="left:179.50px;top:751.73px;font-size:16.20px;color:#616161;letter-spacing:0.009px">(121)-489-1902</div>
<div class="t" style="left:208.40px;top:799.35px;font-size:19.00px;color:#2B2A29;letter-spacing:0.012px">Northwind Traders is</div>
<div class="t" style="left:470.00px;top:801.73px;font-size:16.20px;color:#8A8886;letter-spacing:0.366px">8/22</div>
<div class="t" style="left:180.50px;top:826.35px;font-size:19.00px;color:#2B2A29;letter-spacing:0.129px">expiring soon!</div>
<div class="t" style="left:208.40px;top:876.25px;font-size:19.00px;color:#2B2A29;letter-spacing:-0.100px">Polly sent you a card</div>
<div class="t" style="left:470.00px;top:878.63px;font-size:16.20px;color:#8A8886;letter-spacing:0.366px">8/21</div>
<div class="t" style="left:180.50px;top:904.23px;font-size:16.20px;color:#616161;letter-spacing:0.076px">Take this poll today!</div>
<div class="t" style="left:209.40px;top:952.15px;font-size:19.00px;color:#2B2A29;letter-spacing:-0.262px">Sarah replied</div>
<div class="t" style="left:470.00px;top:954.53px;font-size:16.20px;color:#8A8886;letter-spacing:0.366px">8/20</div>
<div class="t" style="left:180.50px;top:980.83px;font-size:16.20px;color:#616161;letter-spacing:-0.146px">Tailspin Toys &gt; General</div>
<div class="t" style="left:180.50px;top:1004.83px;font-size:16.20px;color:#424242;letter-spacing:0.057px">Customer focus groups sign ups are open</div>
<div class="t" style="left:208.40px;top:1048.25px;font-size:19.00px;color:#2B2A29;letter-spacing:0.164px">Daichi mentioned</div>
<div class="t" style="left:470.00px;top:1050.63px;font-size:16.20px;color:#8A8886;letter-spacing:0.366px">8/19</div>
<div class="t" style="left:180.50px;top:1074.95px;font-size:19.00px;color:#2B2A29;letter-spacing:-0.317px">Tailspin Toys</div>
<div class="t" style="left:180.50px;top:1103.43px;font-size:16.20px;color:#616161;letter-spacing:-0.146px">Tailspin Toys &gt; General</div>
<div class="t" style="left:618.30px;top:95.26px;font-size:23.70px;color:#252423;font-weight:700;letter-spacing:-0.370px">Sales Analysis Review</div>
<div class="t" style="left:888.90px;top:99.85px;font-size:19.00px;color:#616161;letter-spacing:-0.918px">Chat</div>
<div class="t" style="left:949.70px;top:99.85px;font-size:19.00px;color:#616161;letter-spacing:-0.854px">Files</div>
<div class="t" style="left:1009.00px;top:99.85px;font-size:19.00px;color:#616161;letter-spacing:-0.196px">Details</div>
<div class="t" style="left:1088.20px;top:99.85px;font-size:19.00px;color:#616161;letter-spacing:0.291px">Meeting Notes</div>
<div class="t" style="left:1238.10px;top:99.85px;font-size:19.00px;color:#616161;letter-spacing:0.212px">Whiteboard</div>
<div class="t" style="left:1360.80px;top:99.85px;font-size:19.00px;color:#6264A7;letter-spacing:-0.308px;-webkit-text-stroke:0.5px #6264A7">Speaker Coach</div>
<div class="t" style="left:572.00px;top:198.03px;font-size:23.50px;color:#252423;font-weight:700;letter-spacing:0.005px">Your Speaker Coach Insights</div>
<div class="t" style="left:948.30px;top:201.55px;font-size:17.00px;color:#6264A7;letter-spacing:-0.626px">Private</div>
<div class="t" style="left:572.00px;top:243.35px;font-size:19.00px;color:#484644;letter-spacing:0.026px">* Your Coach report is only visible to you.</div>
<div class="t" style="left:1520.20px;top:243.85px;font-size:19.00px;color:#605E5C;letter-spacing:-0.050px">Automatically start Speaker Coach in meetings</div>
<div class="t" style="left:882.50px;top:352.85px;font-size:19.00px;color:#252423;font-weight:700;letter-spacing:-0.769px">Good speech!</div>
<div class="t" style="left:1006.00px;top:352.85px;font-size:19.00px;color:#252423;letter-spacing:0.022px">Just pay more attention to your pace and overlaps.</div>
<div class="t" style="left:922.00px;top:397.90px;font-size:32.70px;color:#252423;font-weight:700;transform:scaleX(0.76);transform-origin:0 0">16:01</div>
<div class="t" style="left:1091.70px;top:397.90px;font-size:32.70px;color:#252423;font-weight:700;transform:scaleX(0.78);transform-origin:0 0">9</div>
<div class="t" style="left:924.00px;top:440.02px;font-size:15.50px;color:#616161;letter-spacing:-0.218px">speaking time</div>
<div class="t" style="left:1092.00px;top:440.02px;font-size:15.50px;color:#616161;letter-spacing:-0.274px">total feedback</div>
<div class="t" style="left:626.40px;top:550.25px;font-size:17.00px;color:#484644;letter-spacing:-0.327px;-webkit-text-stroke:0.45px #484644">Suggestions</div>
<div class="t" style="left:978.10px;top:550.25px;font-size:17.00px;color:#484644;letter-spacing:-0.090px;-webkit-text-stroke:0.45px #484644">Feedback from your last meeting</div>
<div class="t" style="left:664.00px;top:623.91px;font-size:15.40px;color:#252423;font-weight:700;letter-spacing:-0.327px">Filler Words</div>
<div class="t" style="left:642.50px;top:662.66px;font-size:14.40px;color:#484644;letter-spacing:0.130px">Try using less filler words.</div>
<div class="t" style="left:641.50px;top:684.76px;font-size:14.40px;color:#484644;letter-spacing:0.212px">Here are the ones you used</div>
<div class="t" style="left:642.50px;top:706.56px;font-size:14.40px;color:#484644;letter-spacing:0.202px">most. (Click a word to see it</div>
<div class="t" style="left:642.50px;top:728.16px;font-size:14.40px;color:#484644;letter-spacing:0.394px">on the timeline.)</div>
<div class="t" style="left:652.40px;top:766.07px;font-size:13.80px;color:#424242;letter-spacing:-0.510px">like</div>
<div class="t" style="left:679.50px;top:766.07px;font-size:13.80px;color:#464775">7</div>
<div class="t" style="left:713.80px;top:766.07px;font-size:13.80px;color:#424242;letter-spacing:-0.173px">um</div>
<div class="t" style="left:738.00px;top:766.07px;font-size:13.80px;color:#464775">4</div>
<div class="t" style="left:652.40px;top:800.07px;font-size:13.80px;color:#424242;letter-spacing:-0.352px">basically</div>
<div class="t" style="left:708.40px;top:800.07px;font-size:13.80px;color:#464775">3</div>
<div class="t" style="left:931.05px;top:731.02px;font-size:13.50px;color:#3B3C63;letter-spacing:0.254px;-webkit-text-stroke:0.4px #3B3C63">MB</div>
<div class="t" style="left:968.46px;top:871.70px;font-size:13.30px;color:#616161">0:00</div>
<div class="t" style="left:1094.36px;top:871.70px;font-size:13.30px;color:#616161">05:00</div>
<div class="t" style="left:1225.06px;top:871.70px;font-size:13.30px;color:#616161">10:00</div>
<div class="t" style="left:1357.56px;top:871.70px;font-size:13.30px;color:#616161">15:00</div>
<div class="t" style="left:1490.06px;top:871.70px;font-size:13.30px;color:#616161">20:00</div>
<div class="t" style="left:1622.06px;top:871.70px;font-size:13.30px;color:#616161">25:00</div>
<div class="t" style="left:1752.56px;top:871.70px;font-size:13.30px;color:#616161">30:00</div>
<div class="t" style="left:129.65px;top:739.48px;font-size:15.20px;color:#243A73;font-weight:700;letter-spacing:0.649px">MB</div>
</body></html>
